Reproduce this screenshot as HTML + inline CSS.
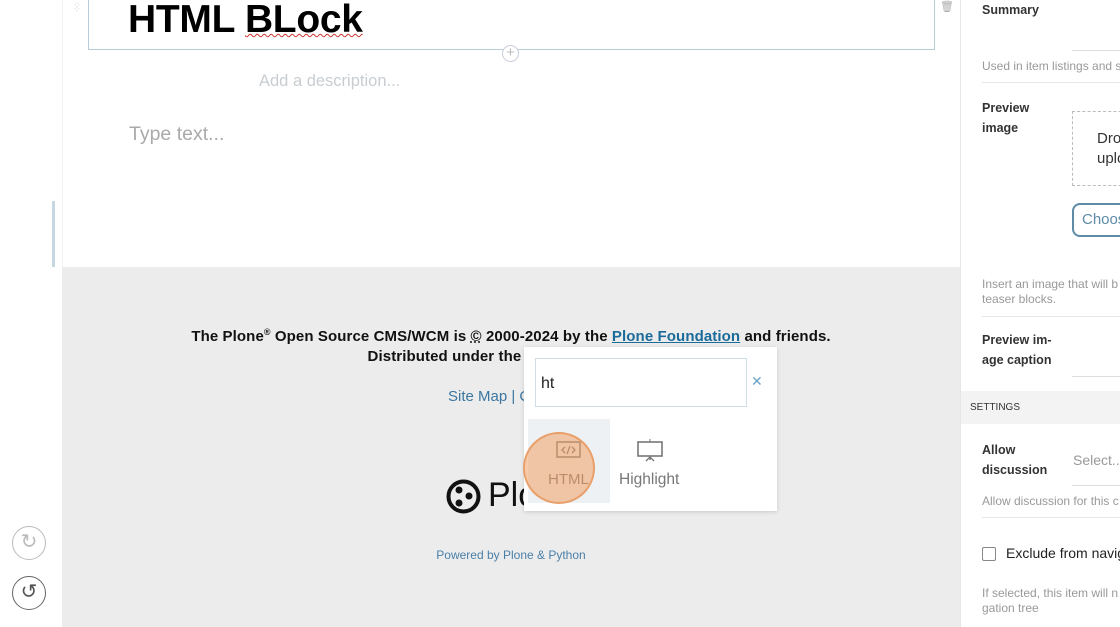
<!DOCTYPE html>
<html><head><style>
*{margin:0;padding:0;box-sizing:border-box}
body{width:1120px;height:627px;overflow:hidden;background:#fff;font-family:"Liberation Sans",sans-serif;position:relative}
.a{position:absolute}
.lab{font-size:12.5px;font-weight:bold;color:#333;line-height:20px}
.help{font-size:12px;color:#999;line-height:15px}
.hr{height:1px;background:#e6e6e6}
</style></head><body>
<div class="a" style="left:62px;top:0;width:1px;height:267px;background:#eef2f4"></div>
<div class="a" style="left:52px;top:201px;width:3px;height:66px;background:#c5d7e3"></div>
<div class="a" style="left:62px;top:267px;width:898px;height:360px;background:#ececec"></div>
<div class="a" style="left:73px;top:3px;color:#ccc;font-size:9px;line-height:4px">⁘<br>⁘</div>
<div class="a" style="left:88px;top:-2px;width:847px;height:52px;border:1px solid #b8ccd8;border-top:none"></div>
<div class="a" style="left:128px;top:-2px;font-size:39px;font-weight:bold;color:#000;line-height:44px;letter-spacing:-0.3px">HTML <span style="text-decoration:underline wavy #c33;text-decoration-thickness:1px">BLock</span></div>
<div class="a" style="left:502px;top:45px;width:17px;height:17px;border:1px solid #ccd;border-radius:50%;background:#fff;color:#bbb;font-size:15px;line-height:14px;text-align:center">+</div>
<div class="a" style="left:940px;top:0;color:#aaa;font-size:11px">🗑</div>
<div class="a" style="left:259px;top:72px;font-size:16.5px;color:#c8cdd2">Add a description...</div>
<div class="a" style="left:129px;top:123px;font-size:19.5px;color:#aaa">Type text...</div>
<div class="a" style="left:62px;top:327px;width:898px;text-align:center;font-size:15px;font-weight:bold;color:#111;line-height:20px;letter-spacing:0.1px">The Plone<sup style="font-size:9px;line-height:0">®</sup> Open Source CMS/WCM is <u style="text-decoration-style:dotted">©</u> 2000-2024 by the <span style="color:#1a6a9a;text-decoration:underline">Plone Foundation</span> and friends.<br>Distributed under the GNU GPL license.</div>
<div class="a" style="left:448px;top:388px;font-size:15px;color:#3a76a0">Site Map | Contact</div>
<svg class="a" style="left:446px;top:479px" width="35" height="35" viewBox="0 0 35 35"><circle cx="17.5" cy="17.5" r="15" fill="none" stroke="#111" stroke-width="4"/><circle cx="13" cy="11" r="3.5" fill="#111"/><circle cx="23" cy="17" r="3.5" fill="#111"/><circle cx="13" cy="24" r="3.5" fill="#111"/></svg>
<div class="a" style="left:488px;top:476px;font-size:34px;color:#111">Plone</div>
<div class="a" style="left:62px;top:548px;width:898px;text-align:center;font-size:12px;color:#4a7fa8">Powered by Plone &amp; Python</div>
<div class="a" style="left:524px;top:347px;width:253px;height:164px;background:#fff;box-shadow:0 1px 4px rgba(0,0,0,.15)"></div>
<div class="a" style="left:535px;top:358px;width:212px;height:49px;border:1px solid #cfdde6;font-size:16px;padding:16px 5px;color:#222">ht</div>
<div class="a" style="left:751px;top:373px;color:#6aa3c6;font-size:14px">✕</div>
<div class="a" style="left:528px;top:419px;width:82px;height:84px;background:#eef1f4"></div>
<svg class="a" style="left:556px;top:440px" width="26" height="20" viewBox="0 0 26 20"><rect x="1" y="2" width="23" height="15" fill="none" stroke="#777" stroke-width="1.5"/><path d="M9 7l-3 3 3 3M16 7l3 3-3 3M14 6l-3 8" fill="none" stroke="#777" stroke-width="1.3"/></svg>
<div class="a" style="left:548px;top:471px;font-size:15px;color:#777">HTML</div>
<svg class="a" style="left:636px;top:439px" width="28" height="24" viewBox="0 0 28 24"><line x1="14" y1="0" x2="14" y2="3" stroke="#777"/><rect x="2" y="3" width="24" height="14" fill="none" stroke="#777" stroke-width="1.6"/><path d="M14 17v4M10 22l4-4 4 4" fill="none" stroke="#777" stroke-width="1.3"/></svg>
<div class="a" style="left:619px;top:471px;font-size:15.5px;color:#777">Highlight</div>
<div class="a" style="left:523px;top:432px;width:72px;height:72px;border-radius:50%;background:rgba(240,160,100,.55);border:2px solid rgba(230,150,90,.8)"></div>
<div class="a" style="left:12px;top:526px;width:34px;height:34px;border:1.5px solid #bbb;border-radius:50%;color:#bbb;font-size:20px;text-align:center;line-height:30px">↻</div>
<div class="a" style="left:12px;top:576px;width:34px;height:34px;border:1.5px solid #666;border-radius:50%;color:#555;font-size:20px;text-align:center;line-height:30px">↺</div>
<div class="a" style="left:960px;top:0;width:160px;height:627px;border-left:1px solid #e6e6e6"></div>
<div class="a lab" style="left:982px;top:0">Summary</div>
<div class="a" style="left:1072px;top:50px;width:48px;height:1px;background:#ddd"></div>
<div class="a help" style="left:982px;top:59px;white-space:nowrap">Used in item listings and s</div>
<div class="a hr" style="left:982px;top:82px;width:138px"></div>
<div class="a lab" style="left:982px;top:98px">Preview<br>image</div>
<div class="a" style="left:1072px;top:111px;width:60px;height:75px;border:1px dashed #bbb"></div>
<div class="a" style="left:1097px;top:129px;font-size:15px;color:#333;line-height:20px">Dro<br>uplo</div>
<div class="a" style="left:1072px;top:203px;width:60px;height:34px;border:2px solid #5d8ba8;border-radius:8px;color:#5d8ba8;font-size:15px;padding:6px 8px">Choose</div>
<div class="a help" style="left:982px;top:277px;white-space:nowrap">Insert an image that will b<br>teaser blocks.</div>
<div class="a hr" style="left:982px;top:316px;width:138px"></div>
<div class="a lab" style="left:982px;top:330px">Preview im-<br>age caption</div>
<div class="a" style="left:1072px;top:376px;width:48px;height:1px;background:#ddd"></div>
<div class="a" style="left:961px;top:391px;width:159px;height:33px;background:#f3f3f3;font-size:10px;color:#333;padding:11px 9px">SETTINGS</div>
<div class="a lab" style="left:982px;top:440px">Allow<br>discussion</div>
<div class="a" style="left:1073px;top:452px;font-size:14px;color:#999">Select...</div>
<div class="a" style="left:1072px;top:485px;width:48px;height:1px;background:#ddd"></div>
<div class="a help" style="left:982px;top:494px;white-space:nowrap">Allow discussion for this c</div>
<div class="a hr" style="left:982px;top:517px;width:138px"></div>
<div class="a" style="left:982px;top:547px;width:14px;height:14px;border:1px solid #888;border-radius:2px"></div>
<div class="a" style="left:1006px;top:545px;font-size:14px;color:#222;white-space:nowrap">Exclude from navig</div>
<div class="a help" style="left:982px;top:586px;white-space:nowrap">If selected, this item will n<br>gation tree</div>
</body></html>
